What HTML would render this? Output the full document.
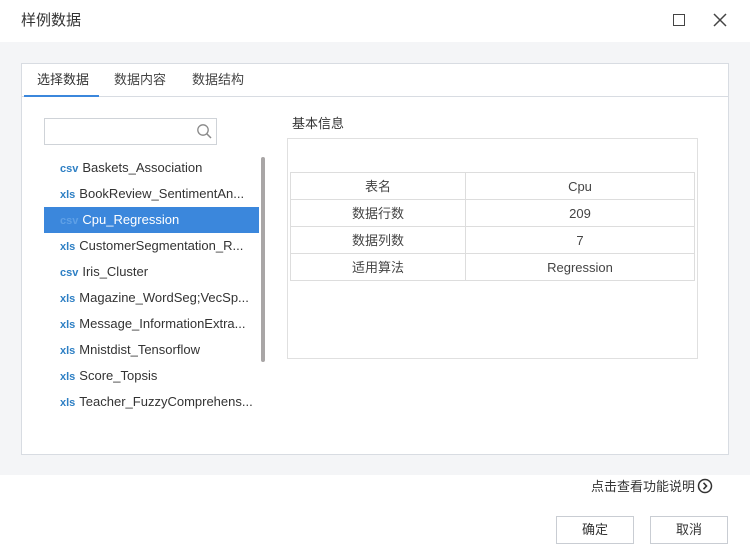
<!DOCTYPE html>
<html><head><meta charset="utf-8"><style>
*{margin:0;padding:0;box-sizing:border-box}
body{width:750px;height:560px;background:#fff;font-family:"Liberation Sans","Noto Sans CJK SC",sans-serif;color:#333;position:relative;overflow:hidden;font-size:13px;line-height:18px}
.abs{position:absolute}
.grey{left:0;top:42px;width:750px;height:433px;background:#f4f5f7}
.panel{left:21px;top:63px;width:708px;height:392px;background:#fff;border:1px solid #d8dce2}
.tab{top:71px;font-size:13px;color:#444}
.item{left:44px;width:215px;height:26px;line-height:26px;padding-left:16px;font-size:13px;color:#333;white-space:nowrap}
.item b{font-weight:bold;color:#2d7fc4;font-size:11px;margin-right:4px}
.sel{background:#3b87dc;color:#fff}
.sel b{color:#5fa0e6}
table{border-collapse:collapse;position:absolute;left:290px;top:172px;width:405px}
td{border:1px solid #ddd;height:27px;line-height:25px;padding:0;text-align:center;font-size:13px;color:#444}
.btn{top:516px;width:78px;height:28px;border:1px solid #c9cdd3;text-align:center;line-height:26px;font-size:13px;color:#333;background:#fff}
</style></head><body>
<div class="abs" style="left:21px;top:12px;font-size:15px;color:#333">样例数据</div>
<div class="abs" style="left:673px;top:14px;width:12px;height:12px;border:1.5px solid #444"></div>
<svg class="abs" style="left:713px;top:13px" width="14" height="14"><path d="M1 1L13 13M13 1L1 13" stroke="#444" stroke-width="1.5"/></svg>
<div class="abs grey"></div>
<div class="abs panel"></div>
<div class="abs" style="left:22px;top:96px;width:706px;height:1px;background:#d8dce2"></div>
<div class="abs" style="left:24px;top:95px;width:75px;height:2px;background:#3b87dc"></div>
<div class="abs tab" style="left:37px;color:#333">选择数据</div>
<div class="abs tab" style="left:114px">数据内容</div>
<div class="abs tab" style="left:192px">数据结构</div>
<div class="abs" style="left:44px;top:118px;width:173px;height:27px;border:1px solid #cfd3d8"></div>
<svg class="abs" style="left:196px;top:123px" width="17" height="17"><circle cx="7" cy="7" r="5.2" stroke="#888" stroke-width="1.3" fill="none"/><path d="M11 11L15 15" stroke="#888" stroke-width="1.5"/></svg>
<div class="abs item" style="top:155px"><b>csv</b>Baskets_Association</div>
<div class="abs item" style="top:181px"><b>xls</b>BookReview_SentimentAn...</div>
<div class="abs item sel" style="top:207px"><b>csv</b>Cpu_Regression</div>
<div class="abs item" style="top:233px"><b>xls</b>CustomerSegmentation_R...</div>
<div class="abs item" style="top:259px"><b>csv</b>Iris_Cluster</div>
<div class="abs item" style="top:285px"><b>xls</b>Magazine_WordSeg;VecSp...</div>
<div class="abs item" style="top:311px"><b>xls</b>Message_InformationExtra...</div>
<div class="abs item" style="top:337px"><b>xls</b>Mnistdist_Tensorflow</div>
<div class="abs item" style="top:363px"><b>xls</b>Score_Topsis</div>
<div class="abs item" style="top:389px"><b>xls</b>Teacher_FuzzyComprehens...</div>
<div class="abs" style="left:261px;top:157px;width:4px;height:205px;background:#a9a6a6;border-radius:2px"></div>
<div class="abs" style="left:292px;top:115px;font-size:13px">基本信息</div>
<div class="abs" style="left:287px;top:138px;width:411px;height:221px;border:1px solid #e0e0e0"></div>
<table>
<tr><td style="width:175px">表名</td><td>Cpu</td></tr>
<tr><td>数据行数</td><td>209</td></tr>
<tr><td>数据列数</td><td>7</td></tr>
<tr><td>适用算法</td><td>Regression</td></tr>
</table>
<div class="abs" style="left:591px;top:478px;font-size:13px">点击查看功能说明</div>
<svg class="abs" style="left:697px;top:478px" width="16" height="16"><circle cx="8" cy="8" r="6.5" stroke="#333" stroke-width="1.5" fill="none"/><path d="M6.5 4.8L9.5 8L6.5 11.2" stroke="#333" stroke-width="1.6" fill="none"/></svg>
<div class="abs btn" style="left:556px">确定</div>
<div class="abs btn" style="left:650px">取消</div>
</body></html>
